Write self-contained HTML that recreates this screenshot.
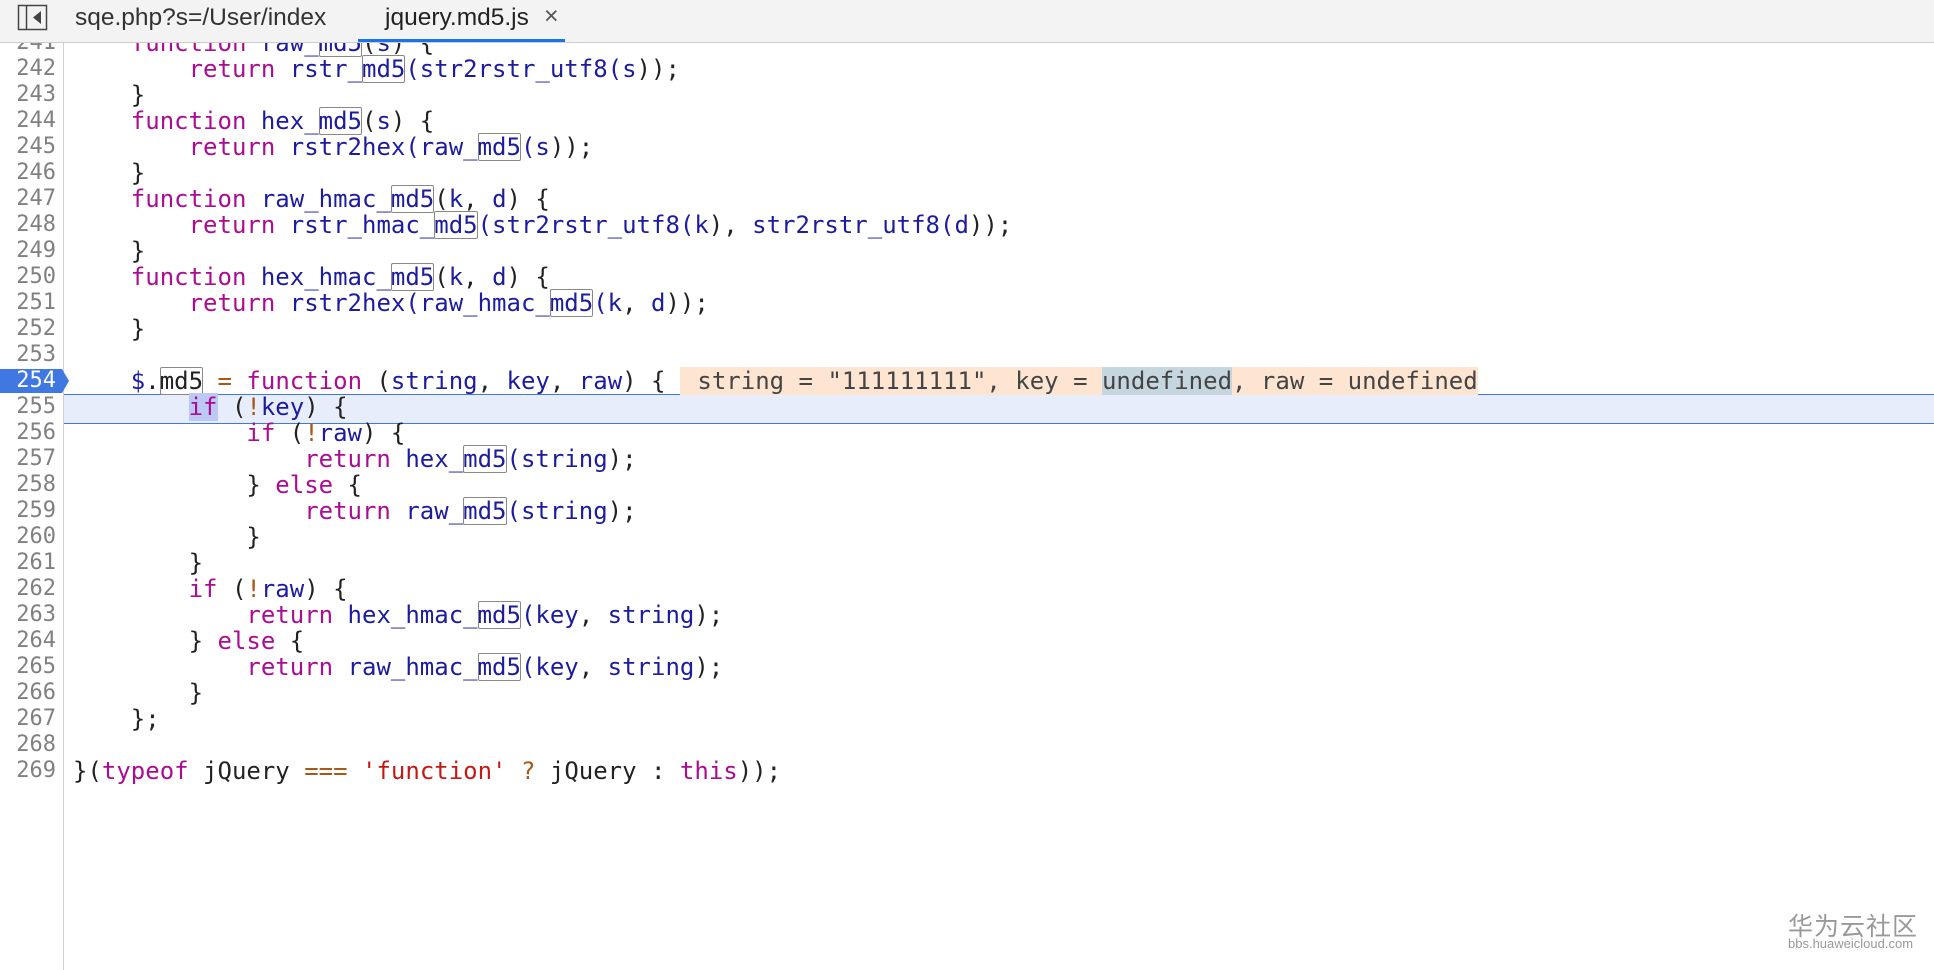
<!DOCTYPE html>
<html><head><meta charset="utf-8"><style>
html,body{margin:0;padding:0;width:1934px;height:970px;overflow:hidden;background:#fff}
#tabs{position:absolute;left:0;top:0;width:1934px;height:42px;background:#f3f3f3;border-bottom:1px solid #cdcdcd;z-index:5;font-family:"Liberation Sans",sans-serif;font-size:24.5px;color:#333}
#tabs .t{position:absolute;top:4px}
#ul{position:absolute;left:358px;top:39px;width:207px;height:3px;background:#1a73e8}
#gut{position:absolute;left:0;top:43px;width:63px;height:927px;border-right:1px solid #d0d0d0;background:#fff}
.ln{position:absolute;left:0;width:56px;text-align:right;height:26px;line-height:26px;font-family:"DejaVu Sans Mono","Liberation Mono",monospace;font-size:22px;color:#808080}
.cl{position:absolute;left:73px;height:26px;line-height:26px;white-space:pre;font-family:"DejaVu Sans Mono","Liberation Mono",monospace;font-size:24px;color:#222}
.k{color:#aa0d91}.v{color:#1c1c9c}.o{color:#a8581a}.s{color:#c41a16}
.m{outline:1px solid #888;outline-offset:-1px;border-radius:2px}
</style></head><body>
<div id="cur" style="position:absolute;left:64px;top:394px;width:1870px;height:28px;background:#e8edfb;border-top:1px solid #3f78e0;border-bottom:1px solid #3f78e0;"></div>
<div id="gut"></div>
<div style="position:absolute;left:0;top:369px;width:62px;height:24px;">
<svg width="72" height="24" style="position:absolute;left:0;top:0"><path d="M0 0H62L69 12L62 24H0Z" fill="#3f78e0"/></svg>
</div>
<div id="code"></div>
<div id="tabs">
<svg width="40" height="40" style="position:absolute;left:14px;top:2px"><rect x="4.5" y="3.5" width="28" height="24" fill="none" stroke="#444" stroke-width="1.5"/><line x1="12.5" y1="3.5" x2="12.5" y2="27.5" stroke="#444" stroke-width="1.5"/><path d="M27 9L19 15.5L27 22Z" fill="#444"/></svg>
<span class="t" style="left:75px">sqe.php?s=/User/index</span>
<span class="t" style="left:385px;color:#222">jquery.md5.js</span>
<span class="t" style="left:544px;font-size:25px;top:2px;color:#555">×</span>
<div id="ul"></div>
</div>
<div style="position:absolute;left:1788px;top:907px;font-family:'Noto Sans CJK SC',sans-serif;font-size:25px;color:#999;letter-spacing:1px">华为云社区</div>
<div style="position:absolute;left:1788px;top:936px;font-family:'Liberation Sans',sans-serif;font-size:13px;color:#999">bbs.huaweicloud.com</div>
<script>
const L={
241:'    <span class="k">function</span> <span class="v">raw_<span class="m">md5</span></span>(<span class="v">s</span>) {',
242:'        <span class="k">return</span> <span class="v">rstr_<span class="m">md5</span>(str2rstr_utf8(s</span>));',
243:'    }',
244:'    <span class="k">function</span> <span class="v">hex_<span class="m">md5</span></span>(<span class="v">s</span>) {',
245:'        <span class="k">return</span> <span class="v">rstr2hex(raw_<span class="m">md5</span>(s</span>));',
246:'    }',
247:'    <span class="k">function</span> <span class="v">raw_hmac_<span class="m">md5</span></span>(<span class="v">k</span>, <span class="v">d</span>) {',
248:'        <span class="k">return</span> <span class="v">rstr_hmac_<span class="m">md5</span>(str2rstr_utf8(k</span>), <span class="v">str2rstr_utf8(d</span>));',
249:'    }',
250:'    <span class="k">function</span> <span class="v">hex_hmac_<span class="m">md5</span></span>(<span class="v">k</span>, <span class="v">d</span>) {',
251:'        <span class="k">return</span> <span class="v">rstr2hex(raw_hmac_<span class="m">md5</span>(k</span>, <span class="v">d</span>));',
252:'    }',
253:'',
254:'    <span class="v">$</span>.<span class="m">md5</span> <span class="o">=</span> <span class="k">function</span> (<span class="v">string</span>, <span class="v">key</span>, <span class="v">raw</span>) { <span style="background:#fde5d2;color:#444;padding-left:3px"> string = "111111111", key = <span style="background:#c6d6de">undefined</span>, raw = undefined</span>',
255:'        <span class="k" style="background:#bcc8f5">if</span> (<span class="o">!</span><span class="v">key</span>) {',
256:'            <span class="k">if</span> (<span class="o">!</span><span class="v">raw</span>) {',
257:'                <span class="k">return</span> <span class="v">hex_<span class="m">md5</span>(string</span>);',
258:'            } <span class="k">else</span> {',
259:'                <span class="k">return</span> <span class="v">raw_<span class="m">md5</span>(string</span>);',
260:'            }',
261:'        }',
262:'        <span class="k">if</span> (<span class="o">!</span><span class="v">raw</span>) {',
263:'            <span class="k">return</span> <span class="v">hex_hmac_<span class="m">md5</span>(key</span>, <span class="v">string</span>);',
264:'        } <span class="k">else</span> {',
265:'            <span class="k">return</span> <span class="v">raw_hmac_<span class="m">md5</span>(key</span>, <span class="v">string</span>);',
266:'        }',
267:'    };',
268:'',
269:'}(<span class="k">typeof</span> jQuery <span class="o">===</span> <span class="s">\'function\'</span> <span class="o">?</span> jQuery : <span class="k">this</span>));'
};
let h='';
for(let i=241;i<=269;i++){const t=30+(i-241)*26;
h+='<div class="ln" style="top:'+t+'px;'+(i==254?'color:#fff;z-index:2':'')+'">'+i+'</div>';
h+='<div class="cl" style="top:'+t+'px">'+L[i]+'</div>';}
document.getElementById('code').innerHTML=h;
</script>
</body></html>
